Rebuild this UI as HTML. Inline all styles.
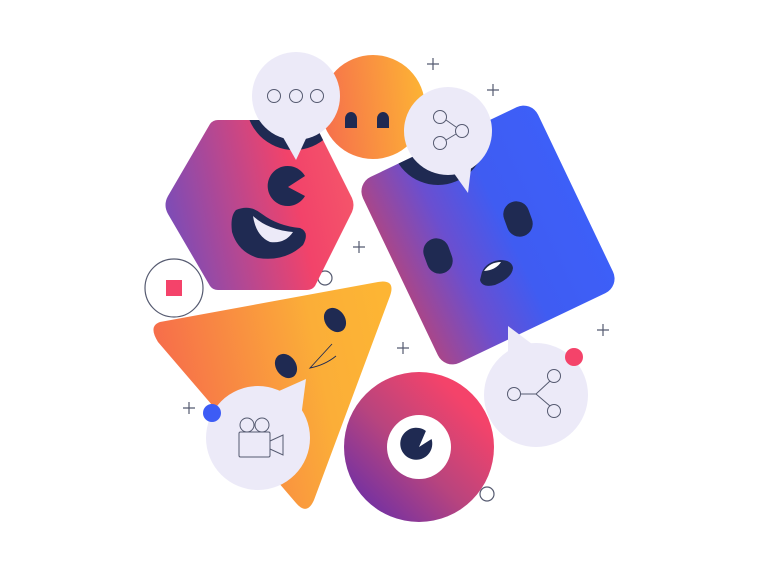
<!DOCTYPE html>
<html><head><meta charset="utf-8"><style>html,body{margin:0;padding:0;background:#fff;width:768px;height:576px;overflow:hidden}</style></head>
<body>
<svg width="768" height="576" viewBox="0 0 768 576" xmlns="http://www.w3.org/2000/svg">
<defs>
<linearGradient id="hex" x1="0" y1="0.6" x2="1" y2="0.4"><stop offset="0" stop-color="#7a4cb8"/><stop offset="0.7" stop-color="#f2436a"/><stop offset="1" stop-color="#f4556a"/></linearGradient>
<linearGradient id="org" x1="0" y1="0.3" x2="1" y2="0.2"><stop offset="0" stop-color="#f6704c"/><stop offset="1" stop-color="#fdb534"/></linearGradient>
<linearGradient id="tri" x1="0" y1="0.5" x2="1" y2="0.3"><stop offset="0" stop-color="#f6684c"/><stop offset="0.7" stop-color="#fbae38"/><stop offset="1" stop-color="#fdb534"/></linearGradient>
<linearGradient id="blu" x1="0" y1="0.5" x2="1" y2="0.5"><stop offset="0" stop-color="#a9468a"/><stop offset="0.3" stop-color="#6a4fd0"/><stop offset="0.6" stop-color="#3f5cf2"/><stop offset="1" stop-color="#3d5ff8"/></linearGradient>
<linearGradient id="don" x1="0" y1="1" x2="1" y2="0"><stop offset="0" stop-color="#5a2ab0"/><stop offset="0.45" stop-color="#b8447e"/><stop offset="0.8" stop-color="#f4436a"/></linearGradient>
<clipPath id="hc"><path d="M168,196 L210,124 Q213,120 218,120 L307,120 Q312,120 315,124 L352,198 Q355,205 352,212 L315,286 Q312,290 307,290 L218,290 Q213,290 210,286 L168,214 Q163,205 168,196Z"/></clipPath>
<clipPath id="bc"><rect x="391" y="132" width="194" height="206" rx="16" transform="rotate(-25.5 488 235)"/></clipPath>
</defs>
<g fill="none" stroke="#555a70" stroke-width="1.2">
<path d="M427,64h12M433,58v12"/><path d="M487,90h12M493,84v12"/><path d="M353,247h12M359,241v12"/><path d="M397,348h12M403,342v12"/><path d="M597,330h12M603,324v12"/><path d="M183,408h12M189,402v12"/>
<circle cx="325" cy="278" r="7"/><circle cx="487" cy="494" r="7"/>
<circle cx="174" cy="288" r="29"/>
</g>
<rect x="166" y="280" width="16" height="16" fill="#f4436a"/>
<circle cx="373" cy="107" r="52" fill="url(#org)"/>
<path d="M345,128v-9a6,7 0 0 1 12,0v9z" fill="#1f2a52"/>
<path d="M377,128v-9a6,7 0 0 1 12,0v9z" fill="#1f2a52"/>
<path d="M168,196 L210,124 Q213,120 218,120 L307,120 Q312,120 315,124 L352,198 Q355,205 352,212 L315,286 Q312,290 307,290 L218,290 Q213,290 210,286 L168,214 Q163,205 168,196Z" fill="url(#hex)"/>
<g clip-path="url(#hc)"><circle cx="294" cy="102" r="48" fill="#1f2a52"/></g>
<path d="M305,176 A20,20 0 1 0 305,196 L288,187 Z" fill="#1f2a52"/>
<path d="M236,210 Q250,204 262,214 Q278,226 300,228 Q310,232 303,245 Q285,262 258,258 Q238,252 232,232 Q230,216 236,210Z" fill="#1f2a52"/>
<path d="M253,216 Q268,230 293,232 Q285,244 270,242 Q256,236 253,216Z" fill="#eceaf8"/>
<rect x="391" y="132" width="194" height="206" rx="16" transform="rotate(-25.5 488 235)" fill="url(#blu)"/>
<g clip-path="url(#bc)"><circle cx="438" cy="138" r="47" fill="#1f2a52"/></g>
<rect x="505" y="201" width="26" height="36" rx="13" transform="rotate(-20 518 219)" fill="#1f2a52"/>
<rect x="425" y="238" width="26" height="36" rx="13" transform="rotate(-20 438 256)" fill="#1f2a52"/>
<path d="M482,272 Q486,262 500,260 Q512,260 513,268 Q512,278 495,285 Q482,288 480,280Z" fill="#1f2a52"/>
<path d="M484,271 Q490,262 501,262 Q496,270 484,271Z" fill="#fff"/>
<path d="M160,322 L378,282 Q396,279 390,296 L314,500 Q307,516 296,503 L158,342 Q148,326 160,322Z" fill="url(#tri)"/>
<ellipse cx="335" cy="320" rx="10" ry="13" transform="rotate(-35 335 320)" fill="#1f2a52"/>
<ellipse cx="286" cy="366" rx="10" ry="13" transform="rotate(-35 286 366)" fill="#1f2a52"/>
<path d="M332,344 L310,368 Q325,365 336,356" fill="none" stroke="#1f2a52" stroke-width="0.9"/>
<circle cx="419" cy="447" r="75" fill="url(#don)"/>
<circle cx="419" cy="447" r="32" fill="#fff"/>
<path d="M430,437 A16,16 0 1 1 423,430 L419,447Z" fill="#1f2a52" transform="rotate(10 419 447)"/>
<g fill="#eceaf8">
<circle cx="296" cy="96" r="44"/><path d="M280,132 L296,160 L310,130Z"/>
<circle cx="448" cy="131" r="44"/><path d="M448,165 L468,193 L472,160Z"/>
<circle cx="258" cy="438" r="52"/><path d="M270,395 L306,379 L300,425Z"/>
<circle cx="536" cy="395" r="52"/><path d="M508,362 L508,326 L540,350Z"/>
</g>
<g fill="none" stroke="#555a70" stroke-width="1">
<circle cx="274" cy="96" r="6.5"/><circle cx="296" cy="96" r="6.5"/><circle cx="317" cy="96" r="6.5"/>
<circle cx="440" cy="117" r="6.5"/><circle cx="462" cy="131" r="6.5"/><circle cx="440" cy="143" r="6.5"/><path d="M446,120L456,127M446,140L456,134"/>
<circle cx="514" cy="394" r="6.5"/><circle cx="554" cy="376" r="6.5"/><circle cx="554" cy="411" r="6.5"/><path d="M520,394H536L550,381M536,394L550,406"/>
<circle cx="247" cy="425" r="7"/><circle cx="262" cy="425" r="7"/><rect x="239" y="432" width="31" height="25" rx="1.5"/><path d="M270,441L283,435V455L270,449"/>
</g>
<circle cx="212" cy="413" r="9" fill="#3d5cf5"/>
<circle cx="574" cy="357" r="9" fill="#f4436a"/>
</svg>
</body></html>
